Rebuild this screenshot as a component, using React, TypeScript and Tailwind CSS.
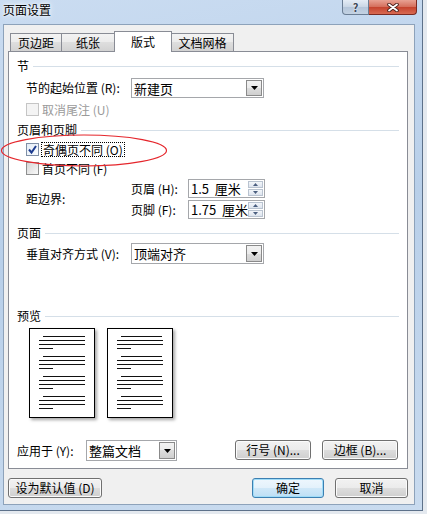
import React from "react";

const BTN = "bg-[linear-gradient(#f2f2f2,#ebebeb_50%,#dddddd_50%,#cfcfcf)]";

function Heading({ label }: { label: string }) {
  return (
    <div className="flex h-[14px] items-center">
      <span>{label}</span>
      <div className="ml-[4px] mr-[8px] h-px flex-1 bg-[#d5dfe8]" />
    </div>
  );
}

function CheckBox({ checked = false, disabled = false }: { checked?: boolean; disabled?: boolean }) {
  if (disabled) {
    return <div className="h-[13px] w-[13px] shrink-0 border border-[#c5c5c5] bg-[#f4f4f4]" />;
  }
  return (
    <div
      className={
        checked
          ? "flex h-[13px] w-[13px] shrink-0 items-center justify-center border border-[#7f8fa6] bg-[linear-gradient(135deg,#e4ecf5,#fbfdff)]"
          : "flex h-[13px] w-[13px] shrink-0 items-center justify-center border border-[#8e8f8f] bg-[linear-gradient(135deg,#d6d6d6,#f9f9f9)]"
      }
    >
      {checked && (
        <svg width="11" height="11" viewBox="0 0 11 11">
          <path d="M2 5.5 L4.5 8.5 L9 2" fill="none" stroke="#1d3c8f" strokeWidth="2" />
        </svg>
      )}
    </div>
  );
}

function Select({ value, w, h }: { value: string; w: string; h: string }) {
  return (
    <div className={`flex ${w} ${h} items-stretch border border-[#a5a7ab] bg-white p-px`}>
      <span className="flex flex-1 items-center pl-[1px] text-[13px]">{value}</span>
      <div className={`flex w-[16px] items-center justify-center border border-[#8a8a8a] ${BTN}`}>
        <svg width="7" height="4" viewBox="0 0 7 4">
          <path d="M0 0 H7 L3.5 4 Z" fill="#000" />
        </svg>
      </div>
    </div>
  );
}

function Spin({ value }: { value: string }) {
  return (
    <div className="flex h-[19px] w-[77px] items-stretch border border-[#a5a7ab] bg-white p-px">
      <span className="flex flex-1 items-center whitespace-pre pl-[1px] text-[13px]">{value}</span>
      <div className="flex w-[15px] flex-col gap-px">
        <div className="flex flex-1 items-center justify-center border border-[#b9c3d0] bg-[linear-gradient(#f3f6fa,#dde4ee)]">
          <svg width="5" height="3" viewBox="0 0 5 3"><path d="M0 3 H5 L2.5 0 Z" fill="#4b5f80" /></svg>
        </div>
        <div className="flex flex-1 items-center justify-center border border-[#b9c3d0] bg-[linear-gradient(#f3f6fa,#dde4ee)]">
          <svg width="5" height="3" viewBox="0 0 5 3"><path d="M0 0 H5 L2.5 3 Z" fill="#4b5f80" /></svg>
        </div>
      </div>
    </div>
  );
}

function Btn({ children, w, focused = false }: { children: React.ReactNode; w: string; focused?: boolean }) {
  return (
    <div
      className={
        focused
          ? `flex ${w} h-[20px] items-center justify-center rounded-[3px] border border-[#3c7fb1] shadow-[inset_0_0_0_1px_#9fdcf8] bg-[linear-gradient(#eef7fd,#e3f1fb_50%,#d0e8f8_50%,#bddff5)]`
          : `flex ${w} h-[20px] items-center justify-center rounded-[3px] border border-[#707070] shadow-[inset_0_0_0_1px_#fbfbfb] ${BTN}`
      }
    >
      {children}
    </div>
  );
}

function Page({ first }: { first: string }) {
  const groups = [0, 1, 2, 3];
  return (
    <div className="flex h-[90px] w-[66px] flex-col gap-[7px] border border-black bg-white pl-[9px] pt-[7px] shadow-[2px_2px_3px_rgba(0,0,0,0.35)]">
      {groups.map((g) => (
        <div key={g} className="flex flex-col gap-[3px]">
          <div className={`ml-[4px] h-px ${first} bg-[#111]`} />
          <div className="h-px w-[46px] bg-[#111]" />
          <div className="h-px w-[46px] bg-[#111]" />
          <div className="h-px w-[14px] bg-[#111]" />
        </div>
      ))}
    </div>
  );
}

const TABS = [
  { label: "页边距", w: "w-[52px]" },
  { label: "纸张", w: "w-[54px]" },
  { label: "版式", w: "w-[58px]", active: true },
  { label: "文档网格", w: "w-[63px]" },
];

export default function App() {
  return (
    <div className="relative h-[514px] w-[427px] overflow-hidden bg-[#e4e9ef] font-['Noto_Sans_CJK_SC','Liberation_Sans',sans-serif] text-[12px] leading-none text-black">
      <div className="flex h-[511px] w-[423px] flex-col border-b border-r border-[#5d718a] bg-[linear-gradient(170deg,#cadcf1,#b8cfe9_45%,#c9dbef)]">
        {/* title bar */}
        <div className="flex h-[24px] items-start justify-between pr-[5px]">
          <span className="pl-[3px] pt-[4px] text-[12px] [text-shadow:0_0_6px_#fff,0_0_3px_#fff]">页面设置</span>
          <div className="flex">
            <div className="flex h-[15px] w-[27px] items-center justify-center rounded-bl-[4px] border border-t-0 border-[#6a7d94] bg-[linear-gradient(#e4ecf5,#c9d6e5_50%,#b4c5d9_50%,#c3d2e3)] text-[11px] font-bold text-[#3c4656] [text-shadow:0_0_2px_#fff]">
              ?
            </div>
            <div className="flex h-[15px] w-[48px] items-center justify-center rounded-br-[4px] border border-l-0 border-t-0 border-[#7a2a22] bg-[linear-gradient(#e8a193,#d46d5a_50%,#c4412c_50%,#d86a52)]">
              <svg width="12" height="9" viewBox="0 0 12 9">
                <path d="M2 1.5 L10 7.5 M10 1.5 L2 7.5" stroke="#4a1f1a" strokeWidth="3.6" strokeLinecap="round" />
                <path d="M2 1.5 L10 7.5 M10 1.5 L2 7.5" stroke="#fff" strokeWidth="1.8" strokeLinecap="round" />
              </svg>
            </div>
          </div>
        </div>

        {/* client area */}
        <div className="ml-[3px] flex h-[481px] w-[412px] flex-col border border-[#8da2ba] bg-[#f0f0f0]">
          {/* tabs */}
          <div className="ml-[6px] mt-[6px] flex h-[20px] items-end">
            {TABS.map((t, i) =>
              t.active ? (
                <div
                  key={t.label}
                  className={`relative z-10 -mb-px -ml-px flex h-[21px] ${t.w} items-center justify-center border border-b-0 border-[#898c95] bg-white`}
                >
                  {t.label}
                </div>
              ) : (
                <div
                  key={t.label}
                  className={`flex h-[18px] ${t.w} items-center justify-center border border-b-0 border-[#898c95] ${i > 0 ? "-ml-px" : ""} bg-[linear-gradient(#f3f3f3,#ebebeb_50%,#dedede_50%,#d2d2d2)]`}
                >
                  {t.label}
                </div>
              )
            )}
          </div>

          {/* panel */}
          <div className="ml-[4px] flex h-[418px] w-[400px] flex-col border border-[#898c95] bg-white pl-[8px]">
            <div className="mt-[7px]">
              <Heading label="节" />
            </div>
            <div className="mt-[5px] flex h-[20px] items-center pl-[9px]">
              <span className="w-[105px]">节的起始位置 (R):</span>
              <Select value="新建页" w="w-[133px]" h="h-[20px]" />
            </div>
            <div className="mt-[2px] flex h-[19px] items-center gap-[3px] pl-[9px] text-[#9a9a9a]">
              <CheckBox disabled />
              <span>取消尾注 (U)</span>
            </div>

            <div className="mt-[4px]">
              <Heading label="页眉和页脚" />
            </div>
            <div className="mt-[3px] flex h-[19px] items-center gap-[2px] pl-[9px]">
              <CheckBox checked />
              <span className="flex h-[15px] items-center border border-dotted border-black px-[1px]">奇偶页不同 (O)</span>
            </div>
            <div className="flex h-[19px] items-center gap-[3px] pl-[9px]">
              <CheckBox />
              <span>首页不同 (F)</span>
            </div>
            <div className="mt-[1px] flex items-center pl-[9px]">
              <span className="w-[105px]">距边界:</span>
              <div className="flex flex-col gap-[2px]">
                <div className="flex h-[19px] items-center">
                  <span className="w-[57px]">页眉 (H):</span>
                  <Spin value="1.5  厘米" />
                </div>
                <div className="flex h-[19px] items-center">
                  <span className="w-[57px]">页脚 (F):</span>
                  <Spin value="1.75  厘米" />
                </div>
              </div>
            </div>

            <div className="mt-[7px]">
              <Heading label="页面" />
            </div>
            <div className="mt-[3px] flex h-[21px] items-center pl-[9px]">
              <span className="w-[105px]">垂直对齐方式 (V):</span>
              <Select value="顶端对齐" w="w-[133px]" h="h-[21px]" />
            </div>

            <div className="mt-[45px]">
              <Heading label="预览" />
            </div>
            <div className="mt-[5px] flex gap-[12px] pl-[12px]">
              <Page first="w-[42px]" />
              <Page first="w-[41px]" />
            </div>

            <div className="mb-[7px] mt-auto flex h-[21px] items-start pr-[9px]">
              <span className="flex h-[21px] w-[69px] items-center">应用于 (Y):</span>
              <Select value="整篇文档" w="w-[91px]" h="h-[21px]" />
              <div className="ml-auto flex gap-[11px]">
                <Btn w="w-[76px]">行号 (N)...</Btn>
                <Btn w="w-[76px]">边框 (B)...</Btn>
              </div>
            </div>
          </div>

          {/* dialog buttons */}
          <div className="ml-[4px] mr-[6px] mt-[9px] flex">
            <Btn w="w-[94px]">设为默认值 (D)</Btn>
            <div className="ml-auto flex gap-[11px]">
              <Btn w="w-[72px]" focused>确定</Btn>
              <Btn w="w-[73px]">取消</Btn>
            </div>
          </div>
        </div>
      </div>

      {/* red annotation ellipse */}
      <svg className="absolute left-0 top-[133px]" width="170" height="36" viewBox="0 0 170 36">
        <ellipse cx="84" cy="17.5" rx="82.5" ry="15.5" fill="none" stroke="#e5262c" strokeWidth="1.2" />
      </svg>
    </div>
  );
}
